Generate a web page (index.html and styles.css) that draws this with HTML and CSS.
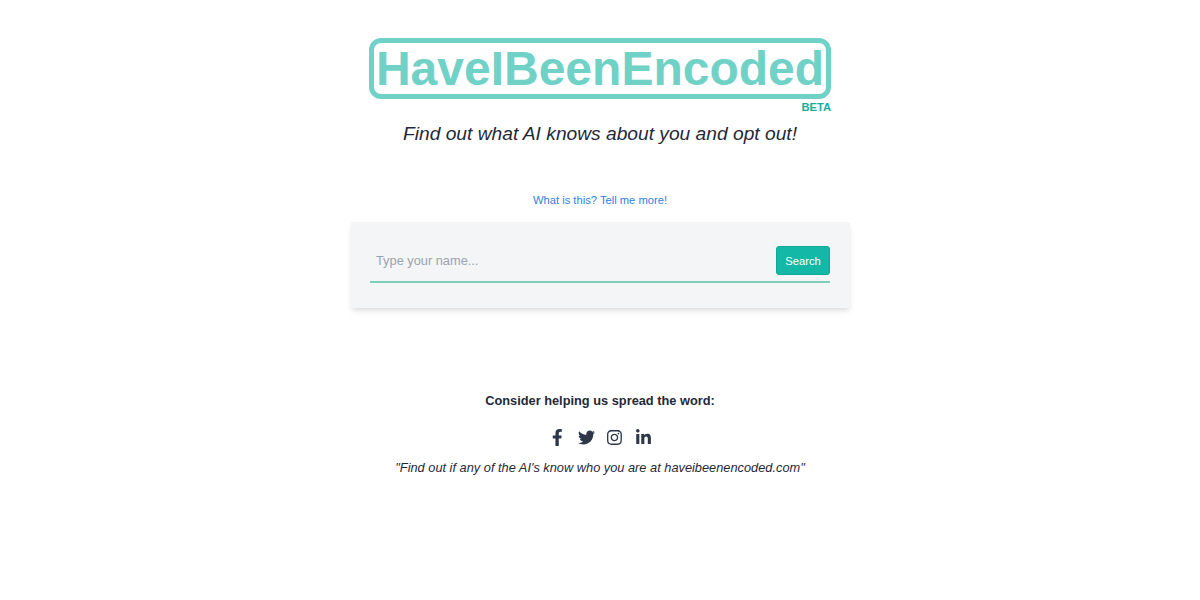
FILE: index.html
```html
<!DOCTYPE html>
<html lang="en">
<head>
<meta charset="utf-8">
<title>HaveIBeenEncoded</title>
<link rel="stylesheet" href="styles.css">
</head>
<body>
<main class="page">
  <header class="brand">
    <div class="logo-wrap">
      <h1 class="logo">HaveIBeenEncoded</h1>
      <div class="beta">BETA</div>
    </div>
    <p class="tagline">Find out what AI knows about you and opt out!</p>
  </header>
  <a class="more" href="#">What is this? Tell me more!</a>
  <section class="card">
    <form class="search">
      <input class="search-input" type="text" placeholder="Type your name...">
      <button class="search-btn" type="button">Search</button>
    </form>
  </section>
  <section class="share">
    <p class="share-title">Consider helping us spread the word:</p>
    <div class="icons">
      <a class="icon" href="#" aria-label="Facebook"><svg viewBox="0 0 320 512" class="ic-f"><path d="M279.14 288l14.22-92.66h-88.91v-60.13c0-25.35 12.42-50.06 52.24-50.06h40.42V6.26S260.43 0 225.36 0c-73.22 0-121.08 44.38-121.08 124.72v70.62H22.89V288h81.39v224h100.17V288z"/></svg></a>
      <a class="icon" href="#" aria-label="Twitter"><svg viewBox="0 0 512 512" class="ic-t"><path d="M459.37 151.716c.325 4.548.325 9.097.325 13.645 0 138.72-105.583 298.558-298.558 298.558-59.452 0-114.68-17.219-161.137-47.106 8.447.974 16.568 1.299 25.34 1.299 49.055 0 94.213-16.568 130.274-44.832-46.132-.975-84.792-31.188-98.112-72.772 6.498.974 12.995 1.624 19.818 1.624 9.421 0 18.843-1.3 27.614-3.573-48.081-9.747-84.143-51.98-84.143-102.985v-1.299c13.969 7.797 30.214 12.67 47.431 13.319-28.264-18.843-46.781-51.005-46.781-87.391 0-19.492 5.197-37.36 14.294-52.954 51.655 63.675 129.3 105.258 216.365 109.807-1.624-7.797-2.599-15.918-2.599-24.04 0-57.828 46.782-104.934 104.934-104.934 30.213 0 57.502 12.67 76.67 33.137 23.715-4.548 46.456-13.32 66.599-25.34-7.798 24.366-24.366 44.833-46.132 57.827 21.117-2.273 41.584-8.122 60.426-16.243-14.292 20.791-32.161 39.308-52.628 54.253z"/></svg></a>
      <a class="icon" href="#" aria-label="Instagram"><svg viewBox="0 0 448 512" class="ic-i"><path d="M224.1 141c-63.6 0-114.9 51.3-114.9 114.9s51.3 114.9 114.9 114.9S339 319.5 339 255.9 287.7 141 224.1 141zm0 189.6c-41.1 0-74.7-33.5-74.7-74.7s33.5-74.7 74.7-74.7 74.7 33.5 74.7 74.7-33.6 74.7-74.7 74.7zm146.4-194.3c0 14.9-12 26.8-26.8 26.8-14.9 0-26.8-12-26.8-26.8s12-26.8 26.8-26.8 26.8 12 26.8 26.8zm76.1 27.2c-1.7-35.9-9.9-67.7-36.2-93.9-26.2-26.2-58-34.4-93.9-36.2-37-2.1-147.9-2.1-184.9 0-35.8 1.7-67.6 9.9-93.9 36.1s-34.4 58-36.2 93.9c-2.1 37-2.1 147.9 0 184.9 1.7 35.9 9.9 67.7 36.2 93.9s58 34.4 93.9 36.2c37 2.1 147.9 2.1 184.9 0 35.9-1.7 67.7-9.9 93.9-36.2 26.2-26.2 34.4-58 36.2-93.9 2.1-37 2.1-147.8 0-184.8zM398.8 388c-7.8 19.6-22.9 34.7-42.6 42.6-29.5 11.7-99.5 9-132.1 9s-102.7 2.6-132.1-9c-19.6-7.8-34.7-22.9-42.6-42.6-11.7-29.5-9-99.5-9-132.1s-2.6-102.7 9-132.1c7.8-19.6 22.9-34.7 42.6-42.6 29.5-11.7 99.5-9 132.1-9s102.7-2.6 132.1 9c19.6 7.8 34.7 22.9 42.6 42.6 11.7 29.5 9 99.5 9 132.1s2.7 102.7-9 132.1z"/></svg></a>
      <a class="icon" href="#" aria-label="LinkedIn"><svg viewBox="0 0 448 512" class="ic-l"><path d="M100.28 448H7.4V148.9h92.88zM53.79 108.1C24.09 108.1 0 83.5 0 53.8a53.79 53.79 0 0 1 107.58 0c0 29.7-24.1 54.3-53.79 54.3zM447.9 448h-92.68V302.4c0-34.7-.7-79.2-48.29-79.2-48.29 0-55.69 37.7-55.69 76.7V448h-92.78V148.9h89.08v40.8h1.3c12.4-23 42.69-48.3 87.88-48.3 94 0 111.28 61.9 111.28 142.3V448z"/></svg></a>
    </div>
    <p class="quote">"Find out if any of the AI's know who you are at haveibeenencoded.com"</p>
  </section>
</main>
</body>
</html>
```
FILE: styles.css
```css
* { box-sizing: border-box; }
html, body { margin: 0; padding: 0; background: #fff; }
body {
  font-family: "Liberation Sans", Arial, sans-serif;
  color: #1f2937;
  height: 600px;
  overflow: hidden;
}
.page {
  display: flex;
  flex-direction: column;
  align-items: center;
  padding-top: 38px;
}
.brand {
  display: flex;
  flex-direction: column;
  align-items: center;
}
.logo-wrap {
  display: flex;
  flex-direction: column;
  align-items: flex-end;
}
.logo {
  margin: 0;
  width: 462px;
  height: 61px;
  border: 5px solid #70d1c6;
  border-radius: 12px;
  color: #70d1c6;
  font-size: 48px;
  font-weight: 700;
  line-height: 52px;
  text-align: center;
  white-space: nowrap;
}
.beta {
  font-size: 11.2px;
  line-height: 16px;
  font-weight: 700;
  color: #12b0a0;
}
.tagline {
  margin: 0;
  margin-top: 5px;
  font-size: 19.2px;
  line-height: 28px;
  font-style: italic;
}
.more {
  margin-top: 44px;
  font-size: 11.2px;
  line-height: 16px;
  color: #2f7fe0;
  text-decoration: none;
}
.card {
  margin-top: 14px;
  width: 499px;
  height: 86px;
  padding: 24px 19.5px 25px 19px;
  background: #f3f5f7;
  border-radius: 2px;
  box-shadow: 0 4px 6px -1px rgba(0, 0, 0, 0.1), 0 2px 4px -1px rgba(0, 0, 0, 0.06);
}
.search {
  display: flex;
  align-items: flex-start;
  height: 37px;
  border-bottom: 2px solid #7fcdbb;
}
.search-input {
  flex: 1;
  min-width: 0;
  height: 29px;
  padding: 0 6.5px;
  border: 0;
  outline: 0;
  background: transparent;
  font-family: inherit;
  font-size: 12.8px;
  color: #1f2937;
}
.search-input::placeholder { color: #9ca3af; opacity: 1; }
.search-btn {
  width: 54px;
  height: 29px;
  padding: 0;
  border: 1px solid #10a896;
  border-radius: 3px;
  background: #14b8a6;
  color: #fff;
  font-family: inherit;
  font-size: 11.2px;
}
.share {
  margin-top: 85px;
  display: flex;
  flex-direction: column;
  align-items: center;
}
.share-title {
  margin: 0;
  font-size: 12.8px;
  line-height: 16px;
  font-weight: 700;
}
.icons {
  display: flex;
  margin-top: 19px;
  height: 18px;
  padding-left: 1px;
}
.icon {
  display: flex;
  justify-content: center;
  align-items: center;
  width: 28.5px;
  height: 18px;
  color: #2d3748;
}
.icon svg { height: 17px; fill: currentColor; display: block; }
.ic-f { width: 10.6px; }
.ic-t { width: 17px; }
.ic-i, .ic-l { width: 14.9px; }
.quote {
  margin: 12px 0 0;
  font-size: 12.8px;
  line-height: 20px;
  font-style: italic;
}
```
